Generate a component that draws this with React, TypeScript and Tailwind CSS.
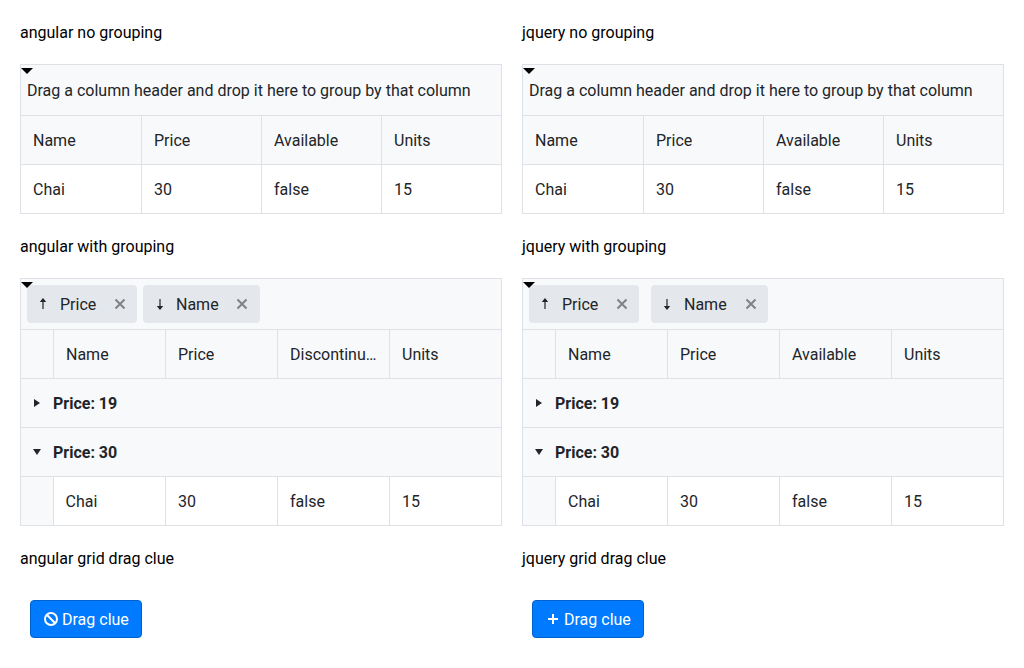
import React from "react";

function Caret({ dir }: { dir: "right" | "down" }) {
  return (
    <svg width="16" height="16" viewBox="0 0 16 16" className="shrink-0" fill="#212529">
      {dir === "right" ? <path d="M5 4 L11 8 L5 12 Z" /> : <path d="M4 5 H12 L8 11 Z" />}
    </svg>
  );
}

function Arrow({ up }: { up: boolean }) {
  return (
    <svg width="16" height="16" viewBox="0 0 16 16" className="shrink-0" fill="none" stroke="#212529" strokeWidth="1.2">
      {up ? (
        <>
          <path d="M8 13 V5" />
          <path d="M8 2 L4.8 6 H11.2 Z" fill="#212529" stroke="none" />
        </>
      ) : (
        <>
          <path d="M8 3 V11" />
          <path d="M8 14 L4.8 10 H11.2 Z" fill="#212529" stroke="none" />
        </>
      )}
    </svg>
  );
}

function Cross() {
  return (
    <svg width="16" height="16" viewBox="0 0 16 16" className="shrink-0" fill="none" stroke="#7f8286" strokeWidth="2">
      <path d="M3.5 3.5 L12.5 12.5 M12.5 3.5 L3.5 12.5" />
    </svg>
  );
}

function Chip({
  label,
  up,
  width,
  pad = "pl-2",
  textGap = "ml-[9px]",
  crossGap = "mr-[9px]",
}: {
  label: string;
  up: boolean;
  width: string;
  pad?: string;
  textGap?: string;
  crossGap?: string;
}) {
  return (
    <div className={`flex h-[38px] items-center rounded-[4px] bg-[#e4e7eb] text-[#212529] ${pad} ${width}`}>
      <Arrow up={up} />
      <span className={`pt-[2px] ${textGap}`}>{label}</span>
      <span className={`ml-auto flex ${crossGap}`}>
        <Cross />
      </span>
    </div>
  );
}

function Notch() {
  return (
    <svg width="12" height="6" viewBox="0 0 12 6" className="absolute left-0 top-[3px]" fill="#000">
      <path d="M0 0 H12 L6 6 Z" />
    </svg>
  );
}

function Cell({ children, cls = "px-3" }: { children?: React.ReactNode; cls?: string }) {
  return (
    <div className={`flex h-[48px] items-center overflow-hidden border-l border-[#dee2e6] first:border-l-0 ${cls}`}>
      <span className="truncate pt-[2px]">{children}</span>
    </div>
  );
}

function PlainGrid() {
  return (
    <div className="relative border border-[#dee2e6] text-[#212529]">
      <Notch />
      <div className="flex h-[51px] items-center border-b border-[#dee2e6] bg-[#f8f9fa] px-[6px]">
        <span className="pt-[2px]">Drag a column header and drop it here to group by that column</span>
      </div>
      <div className="grid grid-cols-4 border-b border-[#dee2e6] bg-[#f8f9fa]">
        <Cell>Name</Cell>
        <Cell>Price</Cell>
        <Cell>Available</Cell>
        <Cell>Units</Cell>
      </div>
      <div className="grid grid-cols-4 bg-white">
        <Cell>Chai</Cell>
        <Cell>30</Cell>
        <Cell>false</Cell>
        <Cell>15</Cell>
      </div>
    </div>
  );
}

function GroupRow({ label, open }: { label: string; open: boolean }) {
  return (
    <div className="flex h-[49px] items-center border-b border-[#dee2e6] bg-[#f8f9fa] pl-2 font-bold">
      <Caret dir={open ? "down" : "right"} />
      <span className="ml-2 pt-[2px]">{label}</span>
    </div>
  );
}

function GroupGrid({ col3, gap, nudge }: { col3: string; gap: string; nudge?: boolean }) {
  return (
    <div className="relative border border-[#dee2e6] text-[#212529]">
      <Notch />
      <div className={`flex h-[51px] items-center border-b border-[#dee2e6] bg-[#f8f9fa] px-[6px] ${gap}`}>
        <Chip label="Price" up width="w-[110px]" />
        {nudge ? (
          <Chip label="Name" up={false} width="w-[117px]" pad="pl-[9px]" textGap="ml-2" crossGap="mr-[10px]" />
        ) : (
          <Chip label="Name" up={false} width="w-[117px]" />
        )}
      </div>
      <div className="grid grid-cols-[32px_repeat(4,112px)] border-b border-[#dee2e6] bg-[#f8f9fa]">
        <Cell />
        <Cell>Name</Cell>
        <Cell>Price</Cell>
        <Cell>{col3}</Cell>
        <Cell>Units</Cell>
      </div>
      <GroupRow label="Price: 19" open={false} />
      <GroupRow label="Price: 30" open />
      <div className="grid grid-cols-[32px_repeat(4,112px)] bg-white">
        <Cell cls="bg-[#f8f9fa]" />
        <Cell cls={nudge ? "pl-[11.5px] pr-3" : "px-3"}>Chai</Cell>
        <Cell>30</Cell>
        <Cell>false</Cell>
        <Cell>15</Cell>
      </div>
    </div>
  );
}

function Clue({ icon }: { icon: "no" | "plus" }) {
  return (
    <div className="p-[10px]">
      <button className="flex h-[38px] w-[112px] items-center gap-[3px] rounded-[4px] border border-[#0062cc] bg-[#007bff] pl-3 text-white">
        {icon === "no" ? (
          <svg width="16" height="16" viewBox="0 0 16 16" fill="none" stroke="#fff" strokeWidth="2">
            <circle cx="8" cy="8" r="6" />
            <path d="M3.8 3.8 L12.2 12.2" />
          </svg>
        ) : (
          <svg width="16" height="16" viewBox="0 0 16 16" fill="none" stroke="#fff" strokeWidth="2">
            <path d="M8 3 V13 M3 8 H13" />
          </svg>
        )}
        <span className="pt-[2px]">Drag clue</span>
      </button>
    </div>
  );
}

function Section({ title, children }: { title: string; children: React.ReactNode }) {
  return (
    <section className="flex flex-col gap-5">
      <div className="h-6 pt-px leading-6 text-[#000]">{title}</div>
      {children}
    </section>
  );
}

export default function App() {
  return (
    <div className="grid grid-cols-2 gap-5 bg-white p-5 font-['Roboto',sans-serif] text-base leading-6">
      <div className="flex flex-col gap-5">
        <Section title="angular no grouping">
          <PlainGrid />
        </Section>
        <Section title="angular with grouping">
          <GroupGrid col3="Discontinued" gap="gap-[6px]" nudge />
        </Section>
        <section>
          <div className="h-6 pt-px leading-6 text-[#000]">angular grid drag clue</div>
          <div className="mt-5">
            <Clue icon="no" />
          </div>
        </section>
      </div>
      <div className="flex flex-col gap-5">
        <Section title="jquery no grouping">
          <PlainGrid />
        </Section>
        <Section title="jquery with grouping">
          <GroupGrid col3="Available" gap="gap-3" />
        </Section>
        <section>
          <div className="h-6 pt-px leading-6 text-[#000]">jquery grid drag clue</div>
          <div className="mt-5">
            <Clue icon="plus" />
          </div>
        </section>
      </div>
    </div>
  );
}
